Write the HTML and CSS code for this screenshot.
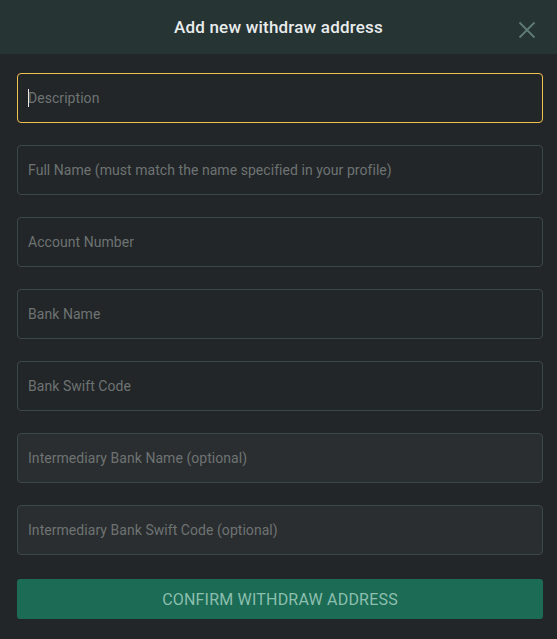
FILE: index.html
```html
<!DOCTYPE html>
<html>
<head>
<meta charset="utf-8">
<link rel="stylesheet" href="styles.css">
</head>
<body>
<div class="modal">
  <div class="header">
    <div class="title">Add new withdraw address</div>
    <button class="close" aria-label="Close">
      <svg width="18" height="18" viewBox="0 0 18 18"><path d="M1.5 1.5 L16.5 16.5 M16.5 1.5 L1.5 16.5" stroke="#5f7b78" stroke-width="1.8" fill="none"/></svg>
    </button>
  </div>
  <form class="body">
    <div class="field focused"><span class="caret"></span><span class="ph">Description</span></div>
    <div class="field"><span class="ph">Full Name (must match the name specified in your profile)</span></div>
    <div class="field"><span class="ph">Account Number</span></div>
    <div class="field"><span class="ph">Bank Name</span></div>
    <div class="field"><span class="ph">Bank Swift Code</span></div>
    <div class="field light"><span class="ph">Intermediary Bank Name (optional)</span></div>
    <div class="field light"><span class="ph">Intermediary Bank Swift Code (optional)</span></div>
    <button type="button" class="confirm">CONFIRM WITHDRAW ADDRESS</button>
  </form>
</div>
</body>
</html>
```

FILE: styles.css
```css
* { box-sizing: border-box; }
html, body { margin: 0; padding: 0; background: #222628; }
body { font-family: Roboto, "Noto Sans", sans-serif; }
.modal { width: 557px; height: 639px; background: #222628; }
.header {
  height: 54px;
  background: #263434;
  display: flex;
  align-items: center;
  justify-content: center;
  position: relative;
}
.title {
  color: #e9ecec;
  font-size: 17px;
  font-weight: 500;
  letter-spacing: 0.2px;
  margin-top: -1px;
}
.close {
  position: absolute;
  right: 21px;
  top: 21px;
  width: 18px;
  height: 18px;
  padding: 0;
  border: 0;
  background: none;
  display: flex;
}
.body {
  padding: 19px 14px 20px 17px;
  display: flex;
  flex-direction: column;
  gap: 22px;
  margin: 0;
}
.field {
  height: 50px;
  border: 1px solid #3b4947;
  border-radius: 4px;
  background: #222628;
  display: flex;
  align-items: center;
  padding-left: 10px;
}
.field.light { background: #2a2e30; }
.field.focused { border-color: #f2c14e; }
.ph {
  color: #6e7373;
  font-size: 14px;
  letter-spacing: 0.05px;
}
.caret {
  width: 1px;
  height: 18px;
  background: #f0f0f0;
  margin-right: -1px;
}
.confirm {
  height: 40px;
  border: 0;
  border-radius: 3px;
  background: #1c6b55;
  color: #8cbfae;
  font-family: Roboto, "Noto Sans", sans-serif;
  font-size: 16px;
  letter-spacing: 0.2px;
  padding: 0;
  margin-top: 2px;
}
```
